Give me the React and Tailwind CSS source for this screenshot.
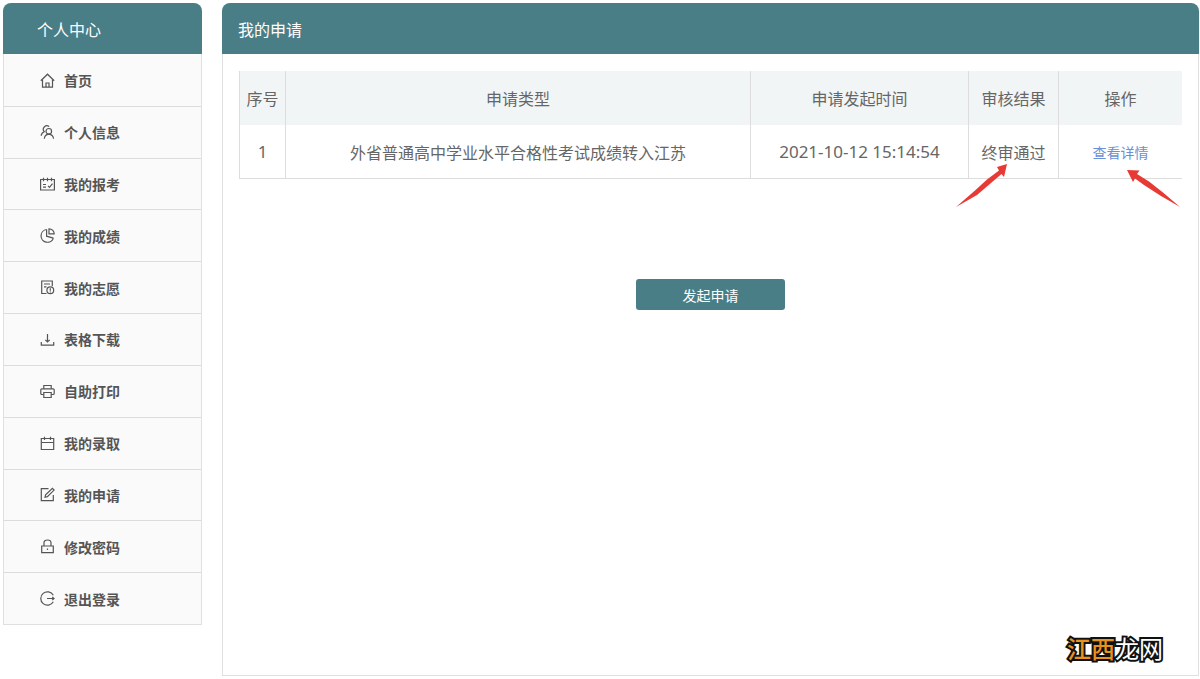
import React from 'react';

const menu = [
  {
    key: 'home',
    label: '首页',
    icon: (
      <>
        <path d="M.8 7.8 7.5 1.2l6.700 6.600" />
        <path d="M2.500 6.500v7.700h10V6.500" />
        <path d="M6 14v-4h3v4" />
      </>
    ),
  },
  {
    key: 'profile',
    label: '个人信息',
    icon: (
      <>
        <circle cx="8.8" cy="6.3" r="2.8" />
        <path d="M4.3 13.8C4.5 11.1 6.2 9.400 8.800 9.100c2.700.3 4.500 2 4.800 4.700" />
        <path d="M9.200 1.600C7.800.5 5.700.6 4.500 1.700 3 3.100 3 5.200 4.200 6.700 2.200 7.500 1.300 8.900 1.200 10.800" />
      </>
    ),
  },
  {
    key: 'exam',
    label: '我的报考',
    icon: (
      <>
        <path d="M.6 2.5h13.8V13H.6z" />
        <path d="M3.5.8v3.4M7.5.8v3.4M11.5.8v3.4" />
        <path d="M3 7.5h3M3 10.2h3M8 8.8l1.5 1.6 3-3.7" />
      </>
    ),
  },
  {
    key: 'score',
    label: '我的成绩',
    icon: (
      <>
        <path d="M6.6 1.5a6.4 6.4 0 1 0 6.8 8.700" />
        <path d="M6.600 1.500v6.700l6.800 2" />
        <path d="M9 .8v5h5.200A5.300 5.300 0 0 0 9 .8z" />
      </>
    ),
  },
  {
    key: 'wish',
    label: '我的志愿',
    icon: (
      <>
        <path d="M6.5 13.5H1.7V1h10.6v5" />
        <path d="M4 4h6M4 6.8h2.5" />
        <circle cx="10.3" cy="10.3" r="3.4" />
        <path d="M10.3 8.3v2.5M10.3 11.5v1" />
      </>
    ),
  },
  {
    key: 'download',
    label: '表格下载',
    icon: (
      <>
        <path d="M1.3 10v3.2h12.4V10" />
        <path d="M7.5 2v7.8M5.3 7.8 7.5 10l2.200-2.200" />
      </>
    ),
  },
  {
    key: 'print',
    label: '自助打印',
    icon: (
      <>
        <path d="M3.8 4.8V1.5h7.4v3.3" />
        <path d="M3.8 10.5h-2a1 1 0 0 1-1-1V5.8a1 1 0 0 1 1-1h11.400a1 1 0 0 1 1 1v3.700a1 1 0 0 1-1 1h-2" />
        <path d="M3.8 8.5h7.4v5H3.8z" />
      </>
    ),
  },
  {
    key: 'admission',
    label: '我的录取',
    icon: (
      <>
        <path d="M1.3 2.5h12.4v11H1.3z" />
        <path d="M1.3 6.5h12.4M4.5.8V4M10.5.8V4" />
      </>
    ),
  },
  {
    key: 'apply',
    label: '我的申请',
    icon: (
      <>
        <path d="M8.5 1.7H1.3v12h12V8" />
        <path d="M5 10.3l.6-2.4L12.400 1.400l1.700 1.700-6.700 6.600z" />
      </>
    ),
  },
  {
    key: 'password',
    label: '修改密码',
    icon: (
      <>
        <path d="M1.7 7h11.6v6.7H1.7z" />
        <path d="M4 7V3.8C4 2 5.2 1 7.500 1S11 2 11 3.800V7M7.500 9.500v1.600" />
      </>
    ),
  },
  {
    key: 'logout',
    label: '退出登录',
    icon: (
      <>
        <path d="M13.3 4.2a6.7 6.7 0 1 0 0 6.6" />
        <path d="M7 7.5h7M12.300 6l1.700 1.500L12.300 9" />
      </>
    ),
  },
];

const rows = [
  {
    id: 1,
    type: '外省普通高中学业水平合格性考试成绩转入江苏',
    time: '2021-10-12 15:14:54',
    result: '终审通过',
  },
];

function MenuIcon({ children }) {
  return (
    <svg
      viewBox="0 0 15 15"
      className="h-[15px] w-[15px] shrink-0"
      fill="none"
      stroke="currentColor"
      strokeWidth="1.2"
      aria-hidden="true"
    >
      {children}
    </svg>
  );
}

function Sidebar() {
  return (
    <aside className="w-[199px] shrink-0 self-start">
      <h2 className="h-[51px] rounded-t-lg bg-[#4a7e87] pl-[34px] text-base leading-[52px] text-white">个人中心</h2>
      <ul className="flex h-[571px] flex-col divide-y divide-[#dcdcdc] border border-t-0 border-[#e0e0e0] bg-[#fafafa] pt-px">
        {menu.map((item) => (
          <li key={item.key} className="flex-1">
            <a href={`#${item.key}`} className="flex h-full items-center gap-[9px] pl-9 text-sm font-bold text-[#555]">
              <MenuIcon>{item.icon}</MenuIcon>
              {item.label}
            </a>
          </li>
        ))}
      </ul>
    </aside>
  );
}

function ApplyTable() {
  return (
    <table className="w-full table-fixed border-separate border-spacing-0 border-l border-[#ddd] text-center text-base text-[#666]">
      <thead>
        <tr className="h-[54px] bg-[#f1f5f6]">
          <th className="w-[46px] border-r border-[#ddd] font-normal">序号</th>
          <th className="border-r border-[#ddd] font-normal">申请类型</th>
          <th className="w-[218px] border-r border-[#ddd] font-normal">申请发起时间</th>
          <th className="w-[90px] border-r border-[#ddd] font-normal">审核结果</th>
          <th className="w-[123px] font-normal">操作</th>
        </tr>
      </thead>
      <tbody>
        {rows.map((row) => (
          <tr key={row.id} className="h-[54px]">
            <td className="border-r border-b border-[#ddd] font-['Noto_Sans'] text-[17px]">{row.id}</td>
            <td className="border-r border-b border-[#ddd]">{row.type}</td>
            <td className="border-r border-b border-[#ddd] font-['Noto_Sans'] text-[17px]">{row.time}</td>
            <td className="relative border-r border-b border-[#ddd]">
              {row.result}
              <svg viewBox="0 0 52 44" className="absolute top-[39px] -left-[13px] h-11 w-[52px] fill-[#e83a35]" aria-hidden="true">
                <path d="M51 0 41 3l2 3.500-12 9-12 11L0 43 21 31l14-12 10.500-9 2.500 3z" />
              </svg>
            </td>
            <td className="relative border-b border-[#ddd]">
              <a href="#detail" className="block text-sm text-[#6b8fd6]">查看详情</a>
              <svg viewBox="0 0 54 38" className="absolute top-[45px] left-[68px] h-[38px] w-[54px] fill-[#e83a35]" aria-hidden="true">
                <path d="M0 0 12.500.5 10 4l12 7.500 14 11L53 37 34 26 17 15 8 8.500 6 12z" />
              </svg>
            </td>
          </tr>
        ))}
      </tbody>
    </table>
  );
}

export default function App() {
  return (
    <div className="flex min-h-screen gap-5 bg-white pt-[3px] pr-px pb-[3px] pl-[3px] font-['Noto_Sans_CJK_SC',sans-serif]">
      <Sidebar />
      <main className="relative flex min-w-0 flex-1 flex-col">
        <h1 className="h-[51px] rounded-t-lg bg-[#4a7e87] pl-4 text-base leading-[52px] text-white">我的申请</h1>
        <div className="flex flex-1 flex-col items-center border border-t-0 border-[#e0e0e0] px-4 pt-[17px]">
          <ApplyTable />
          <button type="button" className="mt-[100px] h-[31px] w-[149px] rounded-[3px] bg-[#4a7e87] text-sm text-white">
            发起申请
          </button>
        </div>
        <div className="absolute right-9 bottom-3 text-2xl text-white [-webkit-text-stroke:4px_#111] [paint-order:stroke_fill]">
          <span className="font-medium text-[#e8921e]">江西</span>龙网
        </div>
      </main>
    </div>
  );
}
